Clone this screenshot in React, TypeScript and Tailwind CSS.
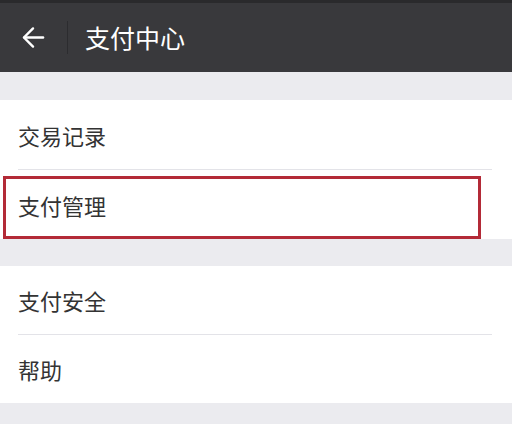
import React from "react";

const font = { fontFamily: '"Noto Sans CJK SC", "Noto Sans", sans-serif' };

function Row({ label, h, divider, marked }: { label: string; h: string; divider?: boolean; marked?: boolean }) {
  return (
    <div className="relative">
      <div className={`${h} flex items-center pl-[18px] pt-[1px] text-[22px] text-[#333333]`}>{label}</div>
      {divider && <div className="ml-[18px] mr-[20px] h-px bg-[#e3e3e8]" />}
      {marked && (
        <div className="absolute left-[3px] top-[6px] bottom-0 w-[478px] border-[3px] border-[#b32a37] pointer-events-none" />
      )}
    </div>
  );
}

export default function App() {
  return (
    <div className="w-[512px] h-[424px] bg-[#ebebef] overflow-hidden" style={font}>
      <div className="h-[3px] bg-[#2a2a2c]" />
      <div className="h-[69px] bg-[#39393c] flex items-center">
        <div className="w-[67px] flex justify-center">
          <svg width="23" height="23" viewBox="0 0 24 24" fill="none" stroke="#ffffff" strokeWidth="2.5" strokeLinecap="round" strokeLinejoin="round">
            <path d="M22 12H2.5" />
            <path d="M11.5 2.5L2 12l9.5 9.5" />
          </svg>
        </div>
        <div className="w-px h-[33px] bg-[#2c2c2f]" />
        <div className="pl-[17px] text-[25px] text-white">支付中心</div>
      </div>
      <div className="h-[28px]" />
      <div className="bg-white">
        <Row label="交易记录" h="h-[69px]" divider />
        <Row label="支付管理" h="h-[69px]" marked />
      </div>
      <div className="h-[27px]" />
      <div className="bg-white">
        <Row label="支付安全" h="h-[68px]" divider />
        <Row label="帮助" h="h-[68px]" />
      </div>
    </div>
  );
}
